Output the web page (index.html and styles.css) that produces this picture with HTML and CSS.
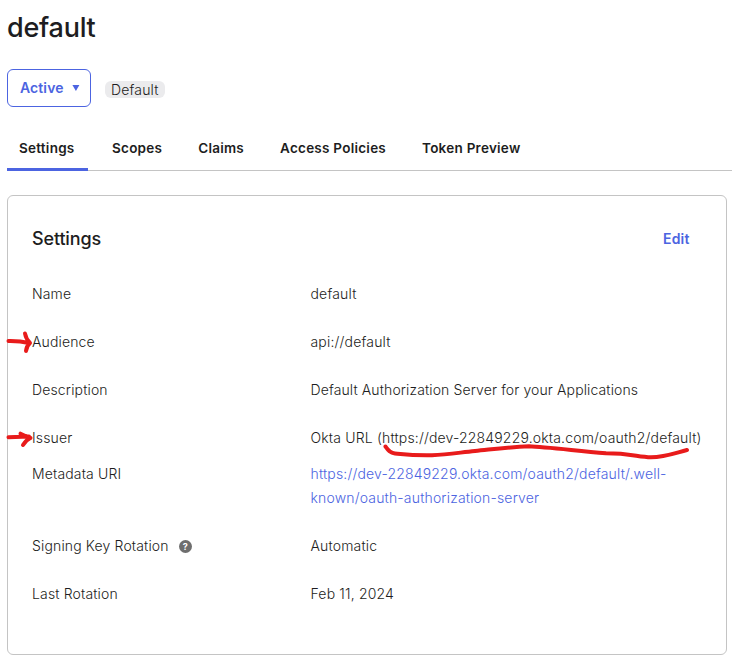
FILE: index.html
```html
<!DOCTYPE html>
<html lang="en">
<head>
<meta charset="utf-8">
<title>default</title>
<link rel="stylesheet" href="styles.css">
</head>
<body>
<main class="page">
  <h1 class="title">default</h1>
  <div class="status">
    <button class="status-button">Active<svg class="caret" width="8" height="6" viewBox="0 0 8 6"><path d="M.4 0h7L3.9 6z" fill="currentColor"/></svg></button>
    <span class="badge">Default</span>
  </div>
  <nav class="tabs">
    <a class="tab tab-current">Settings</a>
    <a class="tab">Scopes</a>
    <a class="tab">Claims</a>
    <a class="tab">Access Policies</a>
    <a class="tab">Token Preview</a>
  </nav>
  <section class="card">
    <header class="card-header">
      <h2 class="card-title">Settings</h2>
      <a class="edit">Edit</a>
    </header>
    <dl class="rows">
      <div class="row"><dt>Name</dt><dd>default</dd></div>
      <div class="row"><dt>Audience</dt><dd>api://default</dd></div>
      <div class="row"><dt>Description</dt><dd class="prose">Default Authorization Server for your Applications</dd></div>
      <div class="row row-tight"><dt>Issuer</dt><dd>Okta URL (https://dev-22849229.okta.com/oauth2/default)</dd></div>
      <div class="row"><dt>Metadata URI</dt><dd><a class="link">https://dev-22849229.okta.com/oauth2/default/.well-<br>known/oauth-authorization-server</a></dd></div>
      <div class="row"><dt>Signing Key Rotation<span class="help">?</span></dt><dd>Automatic</dd></div>
      <div class="row"><dt>Last Rotation</dt><dd>Feb 11, 2024</dd></div>
    </dl>
  </section>
</main>
<svg class="marks" width="732" height="657" viewBox="0 0 732 657">
  <path d="M8.500 341Q20 340.800 29 343M25 333.500Q26 339 30 343Q26.500 346 26 351"/>
  <path d="M8.500 437.200L29 436.600M20.500 433.700Q25 436 30.500 438Q26 440 23 445"/>
  <path d="M385.500 446.500C388 450 390 453 395 453.500C405 454.500 415 455.700 432 455.300C448 454.500 460 452.500 475 451C495 449 510 447 529 446.300C545 447 570 450 606 453.300C630 453.300 638 457 651 457.300C665 457 675 453 687 450"/>
</svg>
</body>
</html>
```

FILE: styles.css
```css
* {
  box-sizing: border-box;
}

body {
  margin: 0;
  width: 732px;
  height: 657px;
  overflow: hidden;
  background: #fff;
  color: #1d1d21;
  font: 300 14px/24px Inter, "Liberation Sans", sans-serif;
  letter-spacing: 0.17px;
}

.page {
  padding: 10px 0 0 7px;
}

.title {
  margin: 0;
  font-size: 27px;
  line-height: 36px;
  font-weight: 500;
  letter-spacing: -0.25px;
}

.status {
  display: flex;
  align-items: center;
  gap: 14px;
  margin-top: 23px;
}

.status-button {
  display: flex;
  align-items: center;
  gap: 8.5px;
  width: 84px;
  height: 38px;
  padding: 0 0 0 12px;
  border: 1px solid #4c64e1;
  border-radius: 6px;
  background: #fff;
  color: #4c64e1;
  font: inherit;
  font-weight: 570;
  letter-spacing: 0.1px;
}

.badge {
  margin-top: 3px;
  padding: 0 6px;
  border-radius: 6px;
  background: #ebebed;
  line-height: 17px;
}

.tabs {
  display: flex;
  gap: 12px;
  height: 49px;
  margin-top: 15px;
  border-bottom: 1px solid #c4c4c4;
  font-size: 13.5px;
  font-weight: 570;
  letter-spacing: 0.25px;
}

.tab {
  height: 49px;
  padding: 14px 12px 0;
}

.tab-current {
  width: 81px;
  border-bottom: 3px solid #4c64e1;
}

.card {
  width: 720px;
  height: 460px;
  margin-top: 24px;
  padding: 30px 24px 0;
  border: 1px solid #c4c4c4;
  border-radius: 6px;
}

.card-header {
  display: flex;
  justify-content: space-between;
  padding-right: 12.5px;
}

.card-title {
  margin: 0;
  font-size: 18px;
  line-height: 25px;
  font-weight: 500;
  letter-spacing: -0.15px;
}

.edit {
  color: #4c64e1;
  font-weight: 570;
  line-height: 26px;
}

.rows {
  margin: 18px 0 0;
}

.row {
  display: grid;
  grid-template-columns: 278.5px 1fr;
  padding: 12px 0;
}

.row-tight {
  padding-bottom: 0;
}

dt {
  display: flex;
  align-items: center;
  height: 24px;
  letter-spacing: 0.15px;
}

dd {
  margin: 0;
  white-space: nowrap;
}

.prose {
  letter-spacing: 0.12px;
}

.link {
  color: #4c64e1;
}

.help {
  width: 13px;
  height: 13px;
  margin-left: 10px;
  border-radius: 50%;
  background: #6e6e6e;
  color: #fff;
  font-size: 9px;
  font-weight: 700;
  line-height: 13px;
  letter-spacing: 0;
  text-align: center;
}

.marks {
  position: absolute;
  left: 0;
  top: 0;
  fill: none;
  stroke: #e81b1b;
  stroke-width: 4;
  stroke-linecap: round;
  stroke-linejoin: round;
  pointer-events: none;
}
```
